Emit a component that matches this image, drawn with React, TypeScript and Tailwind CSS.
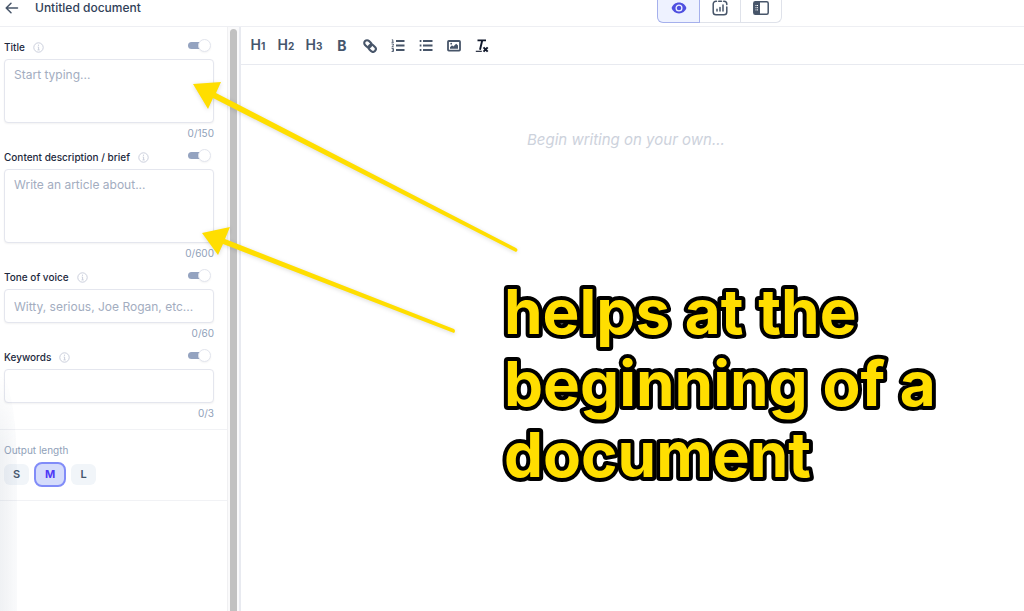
import { useState } from "react";
import type { ReactNode } from "react";

interface FieldConfig {
  id: string;
  label: string;
  placeholder: string;
  max: number;
  multiline?: boolean;
  height: string;
}

const FIELDS: FieldConfig[] = [
  { id: "title", label: "Title", placeholder: "Start typing...", max: 150, multiline: true, height: "h-16" },
  { id: "brief", label: "Content description / brief", placeholder: "Write an article about...", max: 600, multiline: true, height: "h-[74px]" },
  { id: "tone", label: "Tone of voice", placeholder: "Witty, serious, Joe Rogan, etc...", max: 60, height: "h-[34px]" },
  { id: "keywords", label: "Keywords", placeholder: "", max: 3, height: "h-[34px]" },
];

const LENGTHS = ["S", "M", "L"];

function ArrowLeftIcon() {
  return (
    <svg width="14" height="12" viewBox="0 0 14 12" fill="none" stroke="#475569" strokeWidth="1.5" strokeLinecap="round" strokeLinejoin="round">
      <path d="M12.5 6H1.5M6 1.2 1.2 6 6 10.8" />
    </svg>
  );
}

function EyeIcon() {
  return (
    <svg width="16" height="12" viewBox="0 0 16 12">
      <path d="M8 .6C4.5.6 1.7 2.8.6 6c1.1 3.2 3.9 5.4 7.4 5.4s6.3-2.2 7.4-5.4C14.3 2.8 11.5.6 8 .6Z" fill="#4f4fe0" />
      <circle cx="8" cy="6" r="2.9" fill="#4f4fe0" stroke="#eef2ff" strokeWidth="1.3" />
    </svg>
  );
}

function ChartIcon() {
  return (
    <svg width="16" height="16" viewBox="0 0 16 16" fill="none" stroke="#475569" strokeWidth="1.5" strokeLinecap="round">
      <path d="M4.5 1.2H4A2.8 2.8 0 0 0 1.2 4v8A2.8 2.8 0 0 0 4 14.8h8a2.8 2.8 0 0 0 2.800-2.800V7M14.800 4.500V4A2.800 2.800 0 0 0 12 1.200h-.3M6.700 1.200h2.800" />
      <path d="M5 9.3v1.8M8 7.5v3.6M11 5v6.1" />
    </svg>
  );
}

function PanelIcon() {
  return (
    <svg width="16" height="14" viewBox="0 0 16 14">
      <rect x=".8" y=".8" width="14.4" height="12.4" rx="1.5" fill="none" stroke="#475569" strokeWidth="1.5" />
      <path d="M1 1h6v12H1z" fill="#475569" />
      <path d="M2.500 4.500h3M2.500 6.700h3M2.500 8.900h3" stroke="#fff" strokeWidth="1" strokeDasharray="1 .5" />
    </svg>
  );
}

function InfoIcon() {
  return (
    <svg width="11" height="11" viewBox="0 0 11 11" fill="none" stroke="#c5cad8">
      <circle cx="5.5" cy="5.5" r="4.7" strokeWidth=".9" />
      <path d="M4.7 5h.9v2.800M4.500 7.900h2.200" strokeWidth=".9" />
      <circle cx="5.5" cy="3.2" r=".6" fill="#c5cad8" stroke="none" />
    </svg>
  );
}

function LinkIcon() {
  return (
    <svg width="14" height="14" viewBox="0 0 14 14" fill="none" stroke="#475569" strokeWidth="2.1">
      <g transform="rotate(45 7 7)">
        <rect x="0" y="4.2" width="7.8" height="5.6" rx="2.8" />
        <rect x="6.2" y="4.2" width="7.8" height="5.6" rx="2.8" />
      </g>
    </svg>
  );
}

function OrderedListIcon() {
  return (
    <svg width="14" height="14" viewBox="0 0 14 14" fill="none" stroke="#475569">
      <path d="M5 2h8.500M5 6.500h8.500M5 11h8.500" strokeWidth="1.9" />
      <path d="M.8.8h1v2.500M.5 3.300h2.300M.6 5h1.800v1.300L.8 7.800h2M.6 9.500h1.900v3H.6M1 11h1.500" strokeWidth=".9" />
    </svg>
  );
}

function BulletListIcon() {
  return (
    <svg width="14" height="14" viewBox="0 0 14 14" fill="none" stroke="#475569" strokeWidth="1.9">
      <path d="M4 2h9.500M4 6.500h9.500M4 11h9.500M.7 2h1.700M.7 6.500h1.700M.7 11h1.700" />
    </svg>
  );
}

function ImageIcon() {
  return (
    <svg width="14" height="12" viewBox="0 0 14 12">
      <rect x="1" y="1" width="12" height="9.6" rx=".8" fill="none" stroke="#475569" strokeWidth="1.8" />
      <path d="M3 8.700V7.200l2-2 1.300 1.300L9.200 3.700 11 5.500v3.200Z" fill="#475569" />
      <circle cx="4.2" cy="3.7" r=".9" fill="#475569" />
    </svg>
  );
}

function ClearFormatIcon() {
  return (
    <svg width="14" height="14" viewBox="0 0 14 14" fill="none" stroke="#0f172a">
      <path d="M2.500 1.400h8.500M7.200 1.500 5 10.700" strokeWidth="1.9" />
      <path d="M.8 12.300h6" strokeWidth="1.1" />
      <path d="m8.500 8.400 4.200 4.200M12.700 8.400l-4.200 4.200" strokeWidth="2" />
    </svg>
  );
}

function Heading({ level }: { level: number }) {
  return (
    <span className="text-sm leading-4 font-semibold">
      H<span className="text-[10px] font-bold">{level}</span>
    </span>
  );
}

const TOOLS: { name: string; icon: ReactNode }[] = [
  { name: "Heading 1", icon: <Heading level={1} /> },
  { name: "Heading 2", icon: <Heading level={2} /> },
  { name: "Heading 3", icon: <Heading level={3} /> },
  { name: "Bold", icon: <span className="text-sm leading-4 font-bold">B</span> },
  { name: "Link", icon: <LinkIcon /> },
  { name: "Numbered list", icon: <OrderedListIcon /> },
  { name: "Bulleted list", icon: <BulletListIcon /> },
  { name: "Image", icon: <ImageIcon /> },
  { name: "Clear formatting", icon: <ClearFormatIcon /> },
];

function Toggle({ label }: { label: string }) {
  return (
    <label className="mr-[3px] flex h-[13px] cursor-pointer items-center">
      <input type="checkbox" role="switch" aria-label={label} defaultChecked className="sr-only" />
      <span className="h-[7px] w-4 rounded-l-full bg-[#94a3c0]" />
      <span className="-ml-1.5 size-[13px] rounded-full border border-[#e2e5ee] bg-white shadow-xs" />
    </label>
  );
}

function Field({ field }: { field: FieldConfig }) {
  const [value, setValue] = useState("");
  const box =
    "block w-full resize-none rounded border border-[#e4e6ee] bg-white px-[9px] text-xs leading-4 text-slate-700 shadow-xs outline-none placeholder:text-[#a3adbf] focus:border-indigo-400";

  return (
    <div>
      <div className="flex h-4 items-start justify-between">
        <div className="flex h-4 items-center gap-2">
          <label htmlFor={field.id} className="text-[10px] leading-4 font-medium text-slate-800">
            {field.label}
          </label>
          <InfoIcon />
        </div>
        <Toggle label={`Use ${field.label}`} />
      </div>
      <div className="mt-1">
        {field.multiline ? (
          <textarea
            id={field.id}
            value={value}
            maxLength={field.max}
            placeholder={field.placeholder}
            onChange={(e) => setValue(e.target.value)}
            className={`${box} ${field.height} py-[7px]`}
          />
        ) : (
          <input
            id={field.id}
            value={value}
            placeholder={field.placeholder}
            onChange={(e) => setValue(e.target.value)}
            className={`${box} ${field.height}`}
          />
        )}
      </div>
      <p className="mt-0.5 text-right text-[10px] leading-4 text-slate-400">
        {value.length}/{field.max}
      </p>
    </div>
  );
}

function Sidebar() {
  const [length, setLength] = useState("M");

  return (
    <aside className="flex w-[241px] shrink-0 border-r-2 border-[#e8eaf0]">
      <div className="relative min-w-0 flex-1">
        <div className="flex flex-col gap-2 border-b border-[#f1f2f5] pt-3 pr-[13px] pb-2 pl-1">
          {FIELDS.map((field) => (
            <Field key={field.id} field={field} />
          ))}
        </div>
        <div className="border-b border-[#f1f2f5] pt-3 pb-[13px] pl-1">
          <p className="text-[10px] leading-4 text-slate-400">Output length</p>
          <div className="mt-1 flex items-center gap-[5px]">
            {LENGTHS.map((item) => (
              <button
                key={item}
                type="button"
                aria-pressed={length === item}
                onClick={() => setLength(item)}
                className={
                  length === item
                    ? "h-[25px] w-8 rounded-lg border-2 border-[#818cf8] bg-[#d5dcfb] text-[11px] font-bold text-indigo-600"
                    : "h-[21px] w-[25px] rounded-md bg-slate-100 text-[11px] font-semibold text-slate-600"
                }
              >
                {item}
              </button>
            ))}
          </div>
        </div>
        {/* Soft shade along the left edge */}
        <div className="pointer-events-none absolute top-[350px] bottom-0 left-0 w-[17px] rounded-tr-[17px_90px] bg-linear-to-r from-slate-500/10 to-slate-400/5 mask-t-from-[160px]" />
      </div>
      {/* Scrollbar */}
      <div className="flex w-3 shrink-0 justify-center border-l border-[#f0f0f2] bg-[#fafafb] pt-0.5">
        <div className="w-[7px] rounded-t-full bg-[#c1c1c1]" />
      </div>
    </aside>
  );
}

function Header() {
  return (
    <header className="flex h-[27px] shrink-0 items-start border-b border-[#eeeff3]">
      <button type="button" aria-label="Back" className="ml-[5px] flex h-4 items-center">
        <ArrowLeftIcon />
      </button>
      <h1 className="ml-4 text-xs leading-4 font-medium text-slate-700">Untitled document</h1>
      <div className="mr-[242px] ml-auto flex h-[23px]">
        <button type="button" aria-label="Preview" className="flex w-[43px] justify-center rounded-bl-md border border-t-0 border-[#a5b0ec] bg-[#eef2ff] pt-0.5">
          <EyeIcon />
        </button>
        <button type="button" aria-label="Statistics" className="flex w-10 justify-center border-b border-[#dfe2ea]">
          <ChartIcon />
        </button>
        <button type="button" aria-label="Toggle panel" className="flex w-[42px] justify-center rounded-br-md border border-t-0 border-[#dfe2ea] pt-px">
          <PanelIcon />
        </button>
      </div>
    </header>
  );
}

function Editor() {
  return (
    <main className="flex min-w-0 flex-1 flex-col">
      <div className="flex h-[38px] shrink-0 items-center border-b border-[#e8eaf0] px-[3px] text-slate-600">
        {TOOLS.map((tool) => (
          <button key={tool.name} type="button" aria-label={tool.name} className="flex h-7 w-7 items-center justify-center hover:bg-slate-50">
            {tool.icon}
          </button>
        ))}
      </div>
      <textarea
        aria-label="Document body"
        placeholder="Begin writing on your own..."
        className="w-full flex-1 resize-none pt-[63px] pr-8 pl-[286px] text-[15px] leading-6 text-slate-800 outline-none placeholder:text-[#cdd2dc] placeholder:italic"
      />
    </main>
  );
}

function Annotations() {
  return (
    <svg width="1024" height="611" viewBox="0 0 1024 611" className="pointer-events-none absolute top-0 left-0">
      <g fill="#ffde00" className="drop-shadow-sm">
        <path d="M193 84 221 82 216 93 516 248Q519 250 516 252L213 98 208 109Z" />
        <path d="M202 233 230 227 225 239 454 329Q456 331 454 333L223 244 218 255Z" />
      </g>
      <g
        fill="#ffde00"
        stroke="#000"
        strokeWidth="8"
        strokeLinejoin="round"
        className="text-[62px] font-bold [paint-order:stroke]"
      >
        <text x="504" y="334">helps at the</text>
        <text x="504" y="406">beginning of a</text>
        <text x="504" y="477">document</text>
      </g>
    </svg>
  );
}

export default function App() {
  return (
    <div className="relative flex min-h-screen flex-col overflow-hidden bg-white font-[Inter,sans-serif]">
      <Header />
      <div className="flex flex-1">
        <Sidebar />
        <Editor />
      </div>
      <Annotations />
    </div>
  );
}
